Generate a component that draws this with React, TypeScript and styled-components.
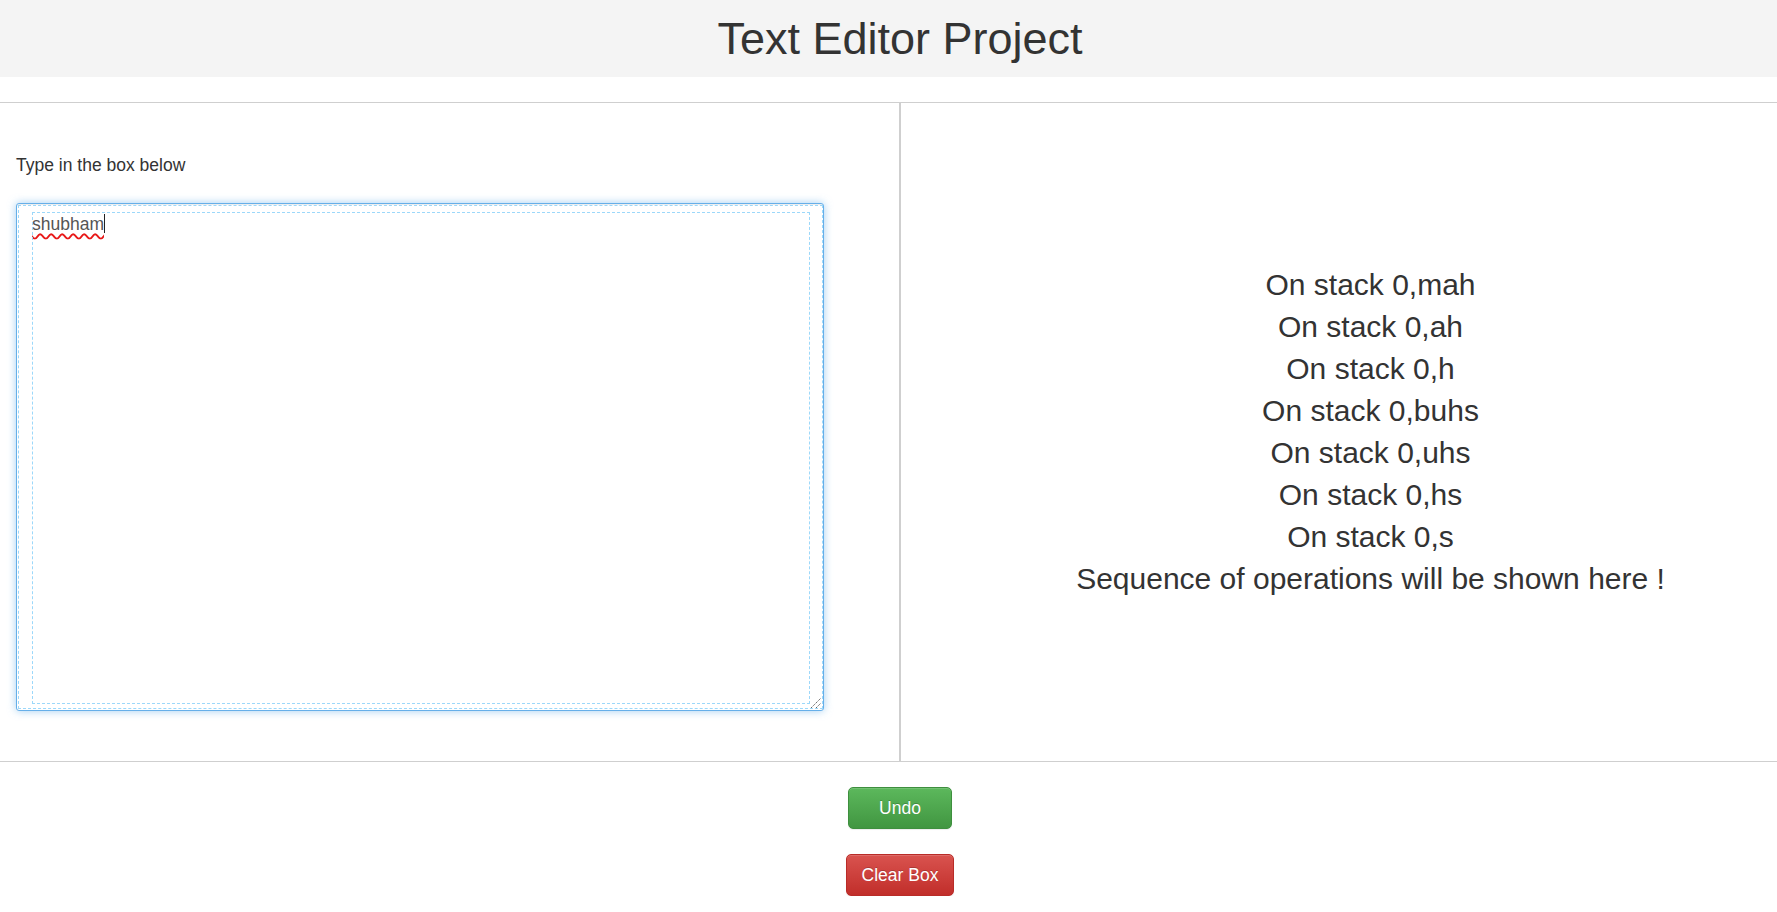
import React from 'react';
import styled, { createGlobalStyle } from 'styled-components';

const operations = [
  'On stack 0,mah',
  'On stack 0,ah',
  'On stack 0,h',
  'On stack 0,buhs',
  'On stack 0,uhs',
  'On stack 0,hs',
  'On stack 0,s',
  'Sequence of operations will be shown here !',
];

const App = () => {
  return (
    <>
      <GlobalStyle />
      <Page>
        <Header>
          <Title>Text Editor Project</Title>
        </Header>

        <Workspace>
          <EditorPane>
            <Label>Type in the box below</Label>
            <EditorBox>
              <Typed>shubham</Typed>
              <Caret />
              <Guide />
              <Guide $inner />
              <Grip width="12" height="12" viewBox="0 0 12 12">
                <line x1="1" y1="11" x2="11" y2="1" stroke="#666" strokeWidth="1" strokeDasharray="1.5 0.8" />
                <line x1="6" y1="11" x2="11" y2="6" stroke="#666" strokeWidth="1" strokeDasharray="1.5 0.8" />
              </Grip>
            </EditorBox>
          </EditorPane>

          <OutputPane>
            {operations.map((op, i) => (
              <OutputLine key={i}>{op}</OutputLine>
            ))}
          </OutputPane>
        </Workspace>

        <Actions>
          <Button $variant="success" $wide>
            Undo
          </Button>
          <Button $variant="danger">Clear Box</Button>
        </Actions>
      </Page>
    </>
  );
};

const GlobalStyle = createGlobalStyle`
  html, body {
    margin: 0;
    padding: 0;
    background: #fff;
    overflow-x: hidden;
  }

  body {
    font-family: "Liberation Sans", Arial, Helvetica, sans-serif;
    font-size: 17.5px;
    line-height: 1.42857;
    color: #333;
  }

  * {
    box-sizing: border-box;
  }
`;

const Page = styled.div`
  width: 1800px;
`;

const Header = styled.header`
  height: 77px;
  background: #f4f4f4;
  display: flex;
  align-items: center;
  justify-content: center;
`;

const Title = styled.h1`
  margin: 0;
  font-size: 45px;
  font-weight: 500;
  line-height: 1.1;
  color: #333;
`;

const Workspace = styled.section`
  margin-top: 25px;
  height: 660px;
  display: grid;
  grid-template-columns: 900px 900px;
  border-top: 1px solid #cfcfcf;
  border-bottom: 1px solid #cfcfcf;
`;

const EditorPane = styled.div`
  border-right: 1px solid #cfcfcf;
  padding: 50px 0 0 16px;
  display: flex;
  flex-direction: column;
`;

const Label = styled.label`
  display: block;
  height: 25px;
  line-height: 25px;
  font-size: 17.5px;
  color: #333;
  margin-bottom: 25px;
`;

const EditorBox = styled.div`
  position: relative;
  width: 808px;
  height: 508px;
  padding: 7.5px 15px;
  border: 1px solid #66afe9;
  border-radius: 3px;
  background: #fff;
  box-shadow: inset 0 1px 1px rgba(0, 0, 0, 0.075), 0 0 8px rgba(102, 175, 233, 0.6);
  font-size: 17.5px;
  line-height: 25px;
  color: #555;
`;

const Typed = styled.span`
  text-decoration: underline wavy #e81818;
  text-decoration-thickness: 1.5px;
  text-underline-offset: 3px;
  text-decoration-skip-ink: none;
`;

const Caret = styled.span`
  display: inline-block;
  width: 1px;
  height: 19px;
  vertical-align: -3px;
  background: #222;
`;

const Guide = styled.div<{ $inner?: boolean }>`
  position: absolute;
  top: ${({ $inner }) => ($inner ? '7.5px' : '1px')};
  left: ${({ $inner }) => ($inner ? '15px' : '1px')};
  right: ${({ $inner }) => ($inner ? '13px' : '0')};
  bottom: ${({ $inner }) => ($inner ? '6px' : '1px')};
  border: 1px dashed #9cd8fa;
  pointer-events: none;
`;

const Grip = styled.svg`
  position: absolute;
  right: 1px;
  bottom: 1px;
`;

const OutputPane = styled.div`
  border-left: 1px solid #cfcfcf;
  padding: 0 0 2px 40px;
  display: flex;
  flex-direction: column;
  align-items: center;
  justify-content: center;
`;

const OutputLine = styled.div`
  font-size: 30px;
  line-height: 37px;
  padding: 2.5px 0;
  color: #333;
  text-align: center;
  white-space: nowrap;
`;

const Actions = styled.div`
  padding-top: 25px;
  display: flex;
  flex-direction: column;
  align-items: center;
  gap: 25px;
`;

const Button = styled.button<{ $variant: 'success' | 'danger'; $wide?: boolean }>`
  font-family: "Liberation Sans", Arial, Helvetica, sans-serif;
  font-size: 17.5px;
  line-height: 25px;
  padding: 7.5px ${({ $wide }) => ($wide ? '30px' : '15px')};
  border-radius: 5px;
  color: #fff;
  cursor: pointer;
  text-shadow: 0 -1px 0 rgba(0, 0, 0, 0.2);
  box-shadow: inset 0 1px 0 rgba(255, 255, 255, 0.15), 0 1px 1px rgba(0, 0, 0, 0.075);
  border: 1px solid ${({ $variant }) => ($variant === 'success' ? '#3e8f3e' : '#b92c28')};
  background: ${({ $variant }) =>
    $variant === 'success'
      ? 'linear-gradient(to bottom, #5cb85c 0%, #419641 100%)'
      : 'linear-gradient(to bottom, #d9534f 0%, #c12e2a 100%)'};
`;

export default App;
